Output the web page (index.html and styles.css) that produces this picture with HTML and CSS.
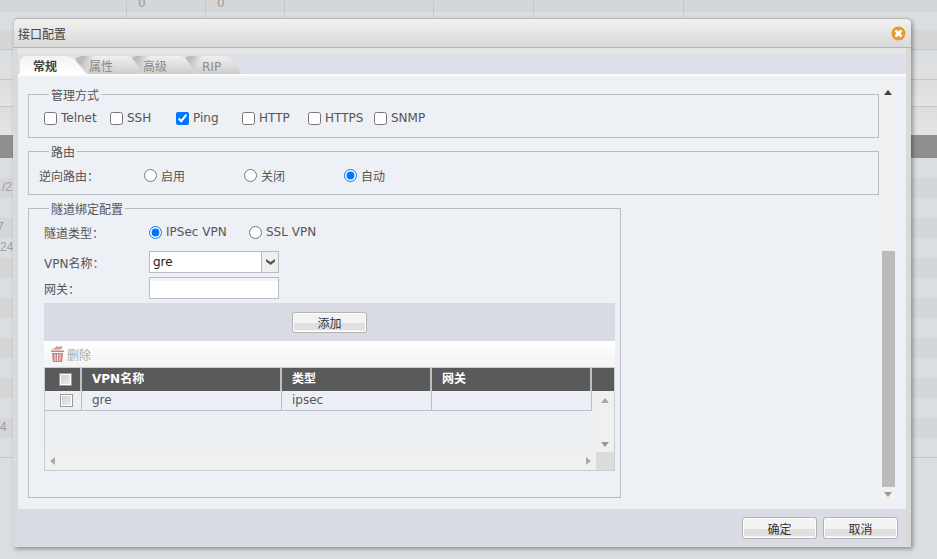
FILE: index.html
```html
<!DOCTYPE html>
<html lang="zh-CN">
<head>
  <meta charset="UTF-8" />
  <title>接口配置</title>
  <link rel="stylesheet" href="styles.css">
</head>
<body>

  <!-- 背景表格 -->
  <div class="backdrop">
    <div class="bg-row bg-top">
      <span class="bg-cell c1"></span><span class="bg-cell c2">0</span><span class="bg-cell c3">0</span><span class="bg-cell c4"></span><span class="bg-cell c5"></span><span class="bg-cell c6"></span>
    </div>
    <div class="bg-row h12"></div>
    <div class="bg-row h20 grey line"></div>
    <div class="bg-row h30 soft line"></div>
    <div class="bg-row h27 grad line"></div>
    <div class="bg-row h28 grad"></div>
    <div class="bg-row h23 dark"></div>
    <div class="bg-row h20"></div>
    <div class="bg-row h20 grey txt ind2">/2</div>
    <div class="bg-row h20"></div>
    <div class="bg-row h20 grey txt cut3">7</div>
    <div class="bg-row h20 txt">24</div>
    <div class="bg-row h20 grey"></div>
    <div class="bg-row h20"></div>
    <div class="bg-row h20 grey"></div>
    <div class="bg-row h20"></div>
    <div class="bg-row h20 grey"></div>
    <div class="bg-row h20"></div>
    <div class="bg-row h20 grey"></div>
    <div class="bg-row h20"></div>
    <div class="bg-row h20 grey txt">4</div>
    <div class="bg-row h20 line"></div>
  </div>

  <!-- 接口配置弹窗 -->
  <div class="dialog">
    <div class="dialog-title">
      <span>接口配置</span>
      <svg class="close-icon" width="15" height="15" viewBox="0 0 15 15">
        <circle cx="7.5" cy="7.5" r="7" fill="#e79a2e"/>
        <path d="M4.5 4.5l6 6M10.5 4.5l-6 6" stroke="#fff" stroke-width="2.6"/>
      </svg>
    </div>
    <div class="dialog-body">
      <div class="tabs">
        <div class="tab active">常规</div>
        <div class="tab tab-attr">属性</div>
        <div class="tab tab-adv">高级</div>
        <div class="tab tab-rip">RIP</div>
      </div>
      <div class="panel">
        <div class="panel-inner">
          <fieldset class="group">
            <legend>管理方式</legend>
            <div class="opts">
              <label class="opt"><input type="checkbox">Telnet</label>
              <label class="opt"><input type="checkbox">SSH</label>
              <label class="opt"><input type="checkbox" checked>Ping</label>
              <label class="opt"><input type="checkbox">HTTP</label>
              <label class="opt"><input type="checkbox">HTTPS</label>
              <label class="opt"><input type="checkbox">SNMP</label>
            </div>
          </fieldset>

          <fieldset class="group route">
            <legend>路由</legend>
            <div class="route-row">
              <span class="route-label">逆向路由：</span>
              <label class="opt wide"><input type="radio" name="route">启用</label>
              <label class="opt wide"><input type="radio" name="route">关闭</label>
              <label class="opt wide"><input type="radio" name="route" checked>自动</label>
            </div>
          </fieldset>

          <fieldset class="group tunnel">
            <legend>隧道绑定配置</legend>
            <div class="form-row type-row">
              <span class="form-label">隧道类型：</span>
              <label class="opt vpn"><input type="radio" name="vpn" checked>IPSec VPN</label>
              <label class="opt"><input type="radio" name="vpn">SSL VPN</label>
            </div>
            <div class="form-row name-row">
              <span class="form-label">VPN名称：</span>
              <div class="combo">
                <span class="combo-text">gre</span>
                <span class="combo-btn"><svg width="9" height="6" viewBox="0 0 9 6"><path d="M0 0l4.500 3L9 0v2.500L4.500 6 0 2.500z" fill="#555"/></svg></span>
              </div>
            </div>
            <div class="form-row gw-row">
              <span class="form-label">网关：</span>
              <div class="text-box"></div>
            </div>

            <div class="add-bar"><button class="btn add-btn">添加</button></div>

            <div class="toolbar">
              <svg width="15" height="16" viewBox="0 0 15 16">
                <path d="M1 4.500h13v1.500H1zM2 7h11l-.8 9H2.800z" fill="#c98585"/>
                <path d="M1.500 3.500l4-2 1-1.500 2 1 3-1 1 1.500-2 2z" fill="#d49a9a"/>
                <path d="M5 8v7M7.500 8v7M10 8v7" stroke="#eee" stroke-width="1"/>
              </svg>
              <span>删除</span>
            </div>

            <div class="grid">
              <div class="grid-head">
                <div class="col col-check"><span class="fake-check"></span></div>
                <div class="col col-name">VPN名称</div>
                <div class="col col-type">类型</div>
                <div class="col col-gw">网关</div>
                <div class="col col-rest"></div>
              </div>
              <div class="grid-main">
                <div class="grid-body">
                  <div class="grid-row">
                    <div class="col col-check"><span class="fake-check"></span></div>
                    <div class="col col-name">gre</div>
                    <div class="col col-type">ipsec</div>
                    <div class="col col-gw"></div>
                  </div>
                </div>
                <div class="vscroll">
                  <span class="arrow up small"></span>
                  <span class="arrow down small"></span>
                </div>
              </div>
              <div class="hscroll">
                <div class="hscroll-track">
                  <span class="arrow left"></span>
                  <span class="arrow right"></span>
                </div>
                <div class="corner"></div>
              </div>
            </div>
          </fieldset>
        </div>

        <div class="scrollbar">
          <span class="arrow up"></span>
          <div class="thumb"></div>
          <span class="arrow down"></span>
        </div>
      </div>
      <div class="dialog-foot">
        <button class="btn">确定</button>
        <button class="btn">取消</button>
      </div>
    </div>
  </div>

</body>
</html>
```

FILE: styles.css
```css
* {
  box-sizing: border-box;
}
html, body {
  height: 100%;
}
body {
  margin: 0;
  overflow: hidden;
  background: #dadde1;
  font-family: "DejaVu Sans", "Noto Sans CJK SC", sans-serif;
  font-size: 12px;
  color: #555;
}

/* backdrop */
.backdrop {
  height: 100%;
}
.bg-row {
  height: 20px;
  background: #dadde1;
}
.bg-top {
  height: 12px;
  display: flex;
  background: #d5d6d8;
  color: #999;
  line-height: 6px;
}
.bg-cell {
  height: 17px;
  flex: none;
  border-right: 1px solid #c6c8cb;
  padding-left: 11px;
  position: relative;
}
.c1 { width: 127px; }
.c2, .c3 { width: 79px; }
.c4 { width: 149px; }
.c5 { width: 100px; }
.c6 { width: 150px; }
.h12 { height: 18px; }
.h20 { height: 20px; }
.h30 { height: 30px; background: linear-gradient(#dadde1 0 12px, #dfdfdf 12px); }
.h27 { height: 27px; }
.h28 { height: 28px; }
.h23 { height: 23px; }
.grey { background: #d5d6d8; }
.grad { background: linear-gradient(#dcdcdc, #e4e4e4); }
.dark { background: #8f8f8f; }
.line { border-bottom: 1px solid #c4c6cc; }
.txt {
  color: #9a9ea6;
  font-family: "Liberation Sans", sans-serif;
  font-size: 12px;
  line-height: 18px;
}
.ind2 { text-indent: 2px; }
.cut3 { text-indent: -3px; }

/* dialog */
.dialog {
  position: absolute;
  left: 13px;
  top: 18px;
  width: 898px;
  height: 529px;
  display: flex;
  flex-direction: column;
  background: #dadada;
  border-radius: 5px 5px 0 0;
  box-shadow: 2px 2px 4px rgba(0,0,0,0.35);
}
.dialog-title {
  height: 30px;
  flex: none;
  display: flex;
  align-items: center;
  justify-content: space-between;
  padding: 0 5px 0 4px;
  font-size: 12px;
  color: #444;
  background: linear-gradient(#f2f1f0, #d9d9d9);
  border-top: 1px solid #b9b9b9;
  border-left: 1px solid #c9c9c9;
  border-bottom: 1px solid #b5b5b5;
  border-radius: 5px 5px 0 0;
}
.close-icon {
  margin-top: 1px;
}
.dialog-body {
  flex: 1;
  min-height: 0;
  display: flex;
  flex-direction: column;
  margin: 0 5px;
  padding-top: 6px;
  background: linear-gradient(#e6e6e6 0 6px, transparent 6px);
}

/* tabs */
.tabs {
  height: 21px;
  flex: none;
  display: flex;
  padding: 2px 0 0 2px;
  background: #dde0e8;
  border-bottom: 1px solid #fff;
}
.tab {
  position: relative;
  padding-top: 4px;
  color: #8a8a8a;
  line-height: 14px;
  background: linear-gradient(120deg, #bcbcbc 0 8px, rgba(190,190,190,0) 18px), linear-gradient(#f0f0f0, #cdcdcd);
  clip-path: polygon(3px 1px, 6px 0, calc(100% - 16px) 0, calc(100% - 11px) 2px, calc(100% - 6px) 8px, 100% 100%, 14px 100%, 2px 6px, 0 3px);
}
.tab.active {
  width: 66px;
  margin-right: -11px;
  padding-left: 13px;
  z-index: 4;
  color: #444;
  font-weight: bold;
  background: linear-gradient(#f3f3f3, #fff);
  clip-path: polygon(0 100%, 0 4px, 4px 0, calc(100% - 18px) 0, calc(100% - 13px) 2px, calc(100% - 8px) 8px, 100% 100%);
}
.tab-attr {
  width: 68px;
  margin-right: -13px;
  padding-left: 14px;
  z-index: 3;
}
.tab-adv {
  width: 66px;
  margin-right: -13px;
  padding-left: 13px;
  z-index: 2;
}
.tab-rip {
  width: 58px;
  padding-left: 19px;
  z-index: 1;
}

/* panel */
.panel {
  flex: 1;
  min-height: 0;
  display: flex;
  background: #edf0f5;
  border-top: 2px solid #f5f6f8;
}
.panel-inner {
  width: 862px;
  flex: none;
  padding: 8px 0 0 10px;
}
.group {
  margin: 0;
  padding: 0;
  width: 851px;
  height: 53px;
  border: 1px solid #b9bcc0;
}
.group legend {
  margin-left: 20px;
  padding: 4px 2px 0;
  line-height: 14px;
}
.opts {
  display: flex;
  padding: 7px 0 0 15px;
}
.opt {
  display: flex;
  align-items: center;
  width: 66px;
  height: 16px;
  white-space: nowrap;
}
.opt input {
  width: 13px;
  height: 13px;
  margin: 0 4px 0 0;
  flex: none;
}
.route {
  margin-top: 4px;
}
.route-row {
  display: flex;
  align-items: center;
  padding: 7px 0 0 10px;
}
.route-label {
  width: 105px;
}
.opt.wide {
  width: 100px;
}
.tunnel {
  margin-top: 4px;
  width: 593px;
  height: 299px;
  padding: 0 5px 0 15px;
}
.tunnel legend {
  margin-left: 5px;
}
.form-row {
  display: flex;
  align-items: center;
}
.form-label {
  width: 105px;
}
.type-row {
  height: 16px;
  margin-top: 7px;
}
.opt.vpn {
  width: 100px;
}
.name-row {
  height: 22px;
  margin-top: 11px;
}
.gw-row {
  height: 22px;
  margin-top: 4px;
}
.combo {
  width: 130px;
  height: 22px;
  display: flex;
  background: #fff;
  border: 1px solid #b9bcc0;
  color: #222;
}
.combo-text {
  flex: 1;
  padding-left: 3px;
  line-height: 20px;
}
.combo-btn {
  width: 17px;
  display: flex;
  align-items: center;
  justify-content: center;
  background: #efefef;
  border-left: 1px solid #b9bcc0;
}
.text-box {
  width: 130px;
  height: 22px;
  background: linear-gradient(#f4f4f4 0 3px, #fff 3px);
  border: 1px solid #b9bcc0;
}

/* add bar + toolbar */
.add-bar {
  height: 38px;
  margin-top: 4px;
  display: flex;
  justify-content: center;
  padding: 9px 0 0 0;
  background: #d8dbe4;
}
.btn {
  width: 75px;
  height: 21px;
  padding: 0;
  font-family: inherit;
  font-size: 12px;
  color: #333;
  border: 1px solid #b3b3b3;
  border-radius: 3px;
  box-shadow: inset 0 0 0 1px #fff;
  background: linear-gradient(#f3f3f3 0 55%, #e0e0e0 55% 90%, #f3f3f3 90%);
}
.toolbar {
  height: 27px;
  display: flex;
  align-items: center;
  gap: 2px;
  padding-left: 6px;
  color: #aaa;
  background: linear-gradient(#fff, #f3f3f3);
  border-bottom: 1px solid #ccc;
}

/* grid */
.grid {
  height: 103px;
  display: flex;
  flex-direction: column;
  border-left: 1px solid #c9ced6;
  border-right: 1px solid #c9ced6;
  border-bottom: 1px solid #c9ced6;
  background: #ecf0f4;
}
.grid-head {
  height: 23px;
  flex: none;
  display: flex;
  background: #5a5a5a;
  color: #fff;
  font-weight: bold;
  line-height: 23px;
}
.col {
  flex: none;
  padding-left: 10px;
  border-right: 2px solid #b9c0c9;
}
.col-check {
  width: 37px;
  padding: 0 0 0 6px;
  display: flex;
  align-items: center;
  justify-content: center;
}
.col-name { width: 200px; }
.col-type { width: 150px; }
.col-gw { width: 160px; }
.col-rest {
  width: 22px;
  border: none;
}
.fake-check {
  width: 13px;
  height: 13px;
  border: 1px solid #9a9a9a;
  box-shadow: inset 0 0 0 1px #fff;
  background: linear-gradient(135deg, #ccc, #f0f0f0);
}
.grid-main {
  flex: 1;
  min-height: 0;
  display: flex;
}
.grid-body {
  flex: 1;
}
.grid-row {
  width: fit-content;
  height: 20px;
  display: flex;
  line-height: 19px;
  border-bottom: 1px solid #b9c0c9;
}
.grid-row .col {
  border-right-width: 1px;
}
.vscroll {
  width: 18px;
  flex: none;
  display: flex;
  flex-direction: column;
  align-items: center;
  justify-content: space-between;
  padding: 7px 0 5px;
  background: #f0f0f0;
}
.hscroll {
  height: 18px;
  flex: none;
  display: flex;
}
.hscroll-track {
  flex: 1;
  display: flex;
  align-items: center;
  justify-content: space-between;
  padding: 0 5px;
  background: #f0f0f0;
}
.corner {
  width: 18px;
  background: #dcdcdc;
}
.arrow {
  width: 0;
  height: 0;
  border-style: solid;
  border-color: transparent;
}
.arrow.up {
  border-width: 0 4px 5px;
  border-bottom-color: #444;
}
.arrow.down {
  border-width: 5px 4px 0;
  border-top-color: #999;
}
.arrow.small.up { border-bottom-color: #aaa; }
.arrow.left {
  border-width: 4px 5px 4px 0;
  border-right-color: #aaa;
}
.arrow.right {
  border-width: 4px 0 4px 5px;
  border-left-color: #aaa;
}

/* page scrollbar */
.scrollbar {
  width: 16px;
  height: 420px;
  margin-top: 7px;
  flex: none;
  display: flex;
  flex-direction: column;
  align-items: center;
  padding-top: 6px;
  background: #f1f1f1;
}
.thumb {
  width: 13px;
  height: 236px;
  margin-top: 156px;
  background: #bbb;
}
.scrollbar .arrow.down {
  margin-top: 5px;
}

/* footer */
.dialog-foot {
  height: 38px;
  flex: none;
  display: flex;
  justify-content: flex-end;
  gap: 6px;
  padding: 8px 8px 0 0;
  background: #d9dce5;
}
.dialog-foot .btn {
  height: 22px;
}
```
